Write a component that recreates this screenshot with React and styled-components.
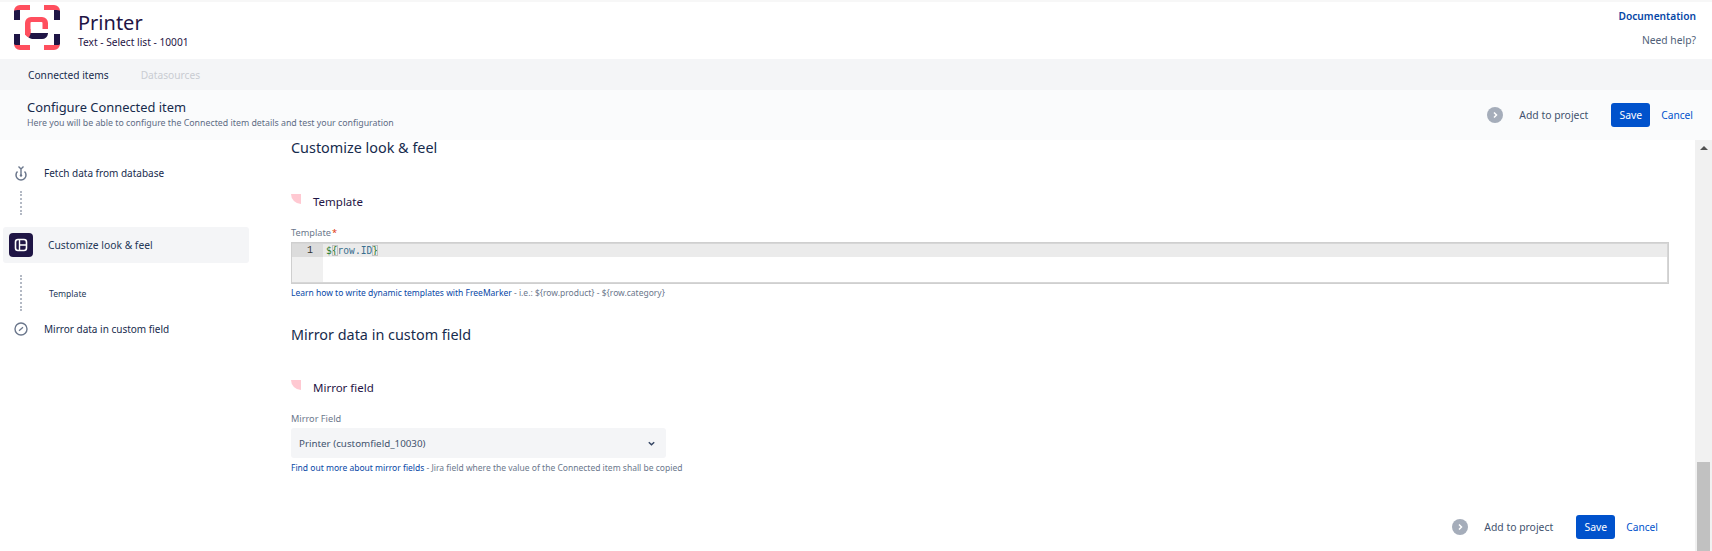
import React from "react";
import styled, { createGlobalStyle } from "styled-components";

const Global = createGlobalStyle`
  html, body { margin: 0; padding: 0; background: #fff; }
  body { font-family: "Noto Sans", "Open Sans", sans-serif; color: #172b4d; overflow: hidden; }
  * { box-sizing: border-box; }
`;

const Page = styled.div`
  width: 1712px; height: 551px; display: flex; flex-direction: column; overflow: hidden;
  border-top: 2px solid #f7f7f7;
`;
const Header = styled.header`
  height: 57px; display: flex; align-items: flex-start; padding: 3px 16px 0 14px; background: #fff;
`;
const Logo = styled.svg`width: 46px; height: 46px; flex: none;`;
const TitleBlock = styled.div`margin-left: 18px; display: flex; flex-direction: column; padding-top: 6px;`;
const Title = styled.div`font-size: 20px; line-height: 24px; color: #1f1545;`;
const Subtitle = styled.div`font-size: 10.2px; line-height: 14px; color: #1f1545;`;
const Help = styled.div`
  margin-left: auto; display: flex; flex-direction: column; align-items: flex-end; padding-top: 3px;
`;
const DocLink = styled.a`font-size: 10.2px; line-height: 16px; font-weight: 600; color: #0747a6;`;
const NeedHelp = styled.span`font-size: 10.3px; line-height: 16px; margin-top: 8px; color: #505f79;`;
const Tabs = styled.nav`
  height: 31px; background: #f4f5f7; display: flex; align-items: center; padding-left: 28px; gap: 32px;
`;
const Tab = styled.span`font-size: 10.2px; color: ${p => (p.$off ? "#c9ccd2" : "#172b4d")};`;
const ConfigBar = styled.div`
  height: 50px; background: #fafbfc; display: flex; align-items: center; padding: 0 19px 0 27px;
`;
const ConfigText = styled.div`display: flex; flex-direction: column;`;
const ConfigTitle = styled.div`font-size: 12.9px; line-height: 18px; color: #172b4d; margin-top: -2px;`;
const ConfigSub = styled.div`font-size: 8.8px; line-height: 13px; color: #5e6c84; margin-top: 1px;`;
const Actions = styled.div`display: flex; align-items: center; margin-left: auto;`;
const Circle = styled.span`
  width: 16px; height: 16px; border-radius: 50%; background: #a5adba; display: flex; align-items: center; justify-content: center;
`;
const AddLink = styled.span`font-size: 10.4px; color: #42526e; margin-left: 16px; width: 92px;`;
const SaveButton = styled.button`
  width: 39px; height: 24px; border: 0; border-radius: 3px; background: #0052cc; color: #fff;
  font: 10.4px "Noto Sans", sans-serif; padding: 0;
`;
const CancelLink = styled.span`font-size: 10.2px; color: #0052cc; margin-left: 11px;`;
const Body = styled.div`flex: 1; display: flex; min-height: 0;`;
const Sidebar = styled.aside`width: 291px; flex: none; padding: 24px 0 0 3px; display: flex; flex-direction: column;`;
const StepRow = styled.div`
  display: flex; align-items: center; height: 18px; font-size: 10px; color: #172b4d; padding-left: 9px;
`;
const StepIcon = styled.svg`width: 18px; height: 18px; flex: none; margin-right: 14px;`;
const Dots = styled.div`
  width: 0; height: ${p => p.$h}px; margin: ${p => p.$top}px 0 ${p => p.$bottom}px 17px;
  border-left: 2px dotted #b3b9c4;
`;
const ActiveRow = styled.div`
  width: 246px; height: 36px; border-radius: 3px; background: #f4f5f7; display: flex; align-items: center;
  padding-left: 6px; font-size: 10.3px; color: #253858;
`;
const ActiveIcon = styled.span`
  width: 24px; height: 24px; border-radius: 4px; background: #1f1545; display: flex; align-items: center;
  justify-content: center; margin-right: 15px;
`;
const SubStep = styled.div`font-size: 8.6px; height: 0; line-height: 0; color: #253858; margin: -26px 0 26px 46px;`;
const Content = styled.main`flex: 1; padding: 0 26px 0 0; display: flex; flex-direction: column; min-width: 0;`;
const SectionTitle = styled.h2`
  font-size: 14.4px; font-weight: 400; line-height: 20px; margin: ${p => p.$top}px 0 0; color: #172b4d;
`;
const FieldHead = styled.div`display: flex; align-items: center; margin-top: ${p => p.$top}px; height: 18px;`;
const Petal = styled.span`
  width: 10px; height: 10px; background: #ffc9d2; border-bottom-left-radius: 10px; margin-right: 12px; margin-top: -4px;
`;
const FieldTitle = styled.span`font-size: 11.5px; color: #1f1545;`;
const Label = styled.label`font-size: 9.2px; line-height: 12px; color: #6b778c; margin-top: ${p => p.$top}px; display: block;`;
const Req = styled.span`color: #de350b; margin-left: 1px;`;
const Editor = styled.div`
  height: 42px; margin-top: 3px; border: 1px solid #cfcfcf; display: flex; background: #fff;
  box-shadow: inset 0 0 0 1px #d6d6d6;
`;
const Gutter = styled.div`width: 31px; background: #f0f0f0; flex: none; margin: 1px 0;`;
const GutterNum = styled.div`
  height: 13px; background: #dcdcdc; font: 10px/13px "Liberation Mono", monospace; text-align: right; padding-right: 10px; color: #333;
`;
const CodeArea = styled.div`flex: 1; margin: 1px 1px 1px 0;`;
const CodeLine = styled.div`
  height: 13px; background: #ebebeb; font: 9.6px/13px "DejaVu Sans Mono", "Liberation Mono", monospace; padding-left: 3px; color: #333;
`;
const Dollar = styled.span`color: #2e7d32;`;
const Brace = styled.span`color: #2e7d32; outline: 1px solid #c2c2c2; outline-offset: -1px;`;
const Ident = styled.span`color: #3a6f8f;`;
const HelpText = styled.div`font-size: 8.5px; line-height: 12px; margin-top: ${p => p.$top}px; color: #6b778c;`;
const HelpLink = styled.a`color: #0747a6;`;
const Select = styled.div`
  width: 375px; height: 30px; margin-top: 3px; background: #f4f5f7; border-radius: 3px; display: flex; align-items: center;
  justify-content: space-between; padding: 0 10px 0 8px; font-size: 9.8px; color: #42526e;
`;
const FooterActions = styled.div`display: flex; justify-content: flex-end; margin-top: 41px; padding-right: 11px;`;
const Scrollbar = styled.div`
  width: 17px; flex: none; background: #f1f1f1; display: flex; flex-direction: column; justify-content: space-between; align-items: center; padding-top: 6px;
`;
const ArrowUp = styled.span`
  width: 0; height: 0; border-left: 4px solid transparent; border-right: 4px solid transparent; border-bottom: 4px solid #505050;
`;
const Thumb = styled.div`width: 13px; height: 89px; background: #c1c1c1;`;

const Chevron = () => (
  <svg width="8" height="8" viewBox="0 0 8 8"><path d="M3 1.5 5.5 4 3 6.5" fill="none" stroke="#fff" strokeWidth="1.5" /></svg>
);

const Actionset = () => (
  <Actions>
    <Circle><Chevron /></Circle>
    <AddLink>Add to project</AddLink>
    <SaveButton>Save</SaveButton>
    <CancelLink>Cancel</CancelLink>
  </Actions>
);

export default function App() {
  return (
    <Page>
      <Global />
      <Header>
        <Logo viewBox="0 0 46 46">
          <path d="M0 6a6 6 0 0 1 6-6h10v5H6L0 6Z" fill="#ff4f5e" />
          <path d="M0 6c0-1 2-1 6-1v10H0Z" fill="#1f1545" />
          <path d="M46 6a6 6 0 0 0-6-6H30v5h10l6 1Z" fill="#ff4f5e" />
          <path d="M46 6c0-1-2-1-6-1v10h6Z" fill="#1f1545" />
          <path d="M0 39a6 6 0 0 0 6 6h10v-5H6L0 39Z" fill="#ff4f5e" />
          <path d="M0 39c0 1 2 1 6 1V29H0Z" fill="#1f1545" />
          <path d="M46 39a6 6 0 0 1-6 6H30v-5h10l6-1Z" fill="#ff4f5e" />
          <path d="M46 39c0 1-2 1-6 1V29h6Z" fill="#1f1545" />
          <path d="M11 30V18a6 6 0 0 1 6-6h11a6 6 0 0 1 6 6v6h-5.500v-6a1 1 0 0 0-1-1H17.500a1 1 0 0 0-1 1v10l-5 2Z" fill="#ff4f5e" />
          <path d="M13 28h21v.5a6 6 0 0 1-6 5.500H18a6 6 0 0 1-5-5.500Z" fill="#1f1545" />
          <path d="M11 24h5.500v5l-1.500 3.500c-2.500-.5-4-2.500-4-4.500Z" fill="#ff4f5e" />
        </Logo>
        <TitleBlock>
          <Title>Printer</Title>
          <Subtitle>Text - Select list - 10001</Subtitle>
        </TitleBlock>
        <Help>
          <DocLink>Documentation</DocLink>
          <NeedHelp>Need help?</NeedHelp>
        </Help>
      </Header>
      <Tabs>
        <Tab>Connected items</Tab>
        <Tab $off>Datasources</Tab>
      </Tabs>
      <ConfigBar>
        <ConfigText>
          <ConfigTitle>Configure Connected item</ConfigTitle>
          <ConfigSub>Here you will be able to configure the Connected item details and test your configuration</ConfigSub>
        </ConfigText>
        <Actionset />
      </ConfigBar>
      <Body>
        <Sidebar>
          <StepRow>
            <StepIcon viewBox="0 0 18 18">
              <path d="M5.500 7.500a5 5 0 1 0 7 0" fill="none" stroke="#6b778c" strokeWidth="1.5" />
              <path d="M6.500 2.500 9 5l2.500-2.500M9 5v6" fill="none" stroke="#6b778c" strokeWidth="1.4" />
              <circle cx="9" cy="11.500" r="1.200" fill="#6b778c" />
            </StepIcon>
            Fetch data from database
          </StepRow>
          <Dots $h={24} $top={9} $bottom={12} />
          <ActiveRow>
            <ActiveIcon>
              <svg width="14" height="14" viewBox="0 0 14 14">
                <rect x="1.500" y="1.500" width="11" height="11" rx="2.500" fill="none" stroke="#fff" strokeWidth="1.600" />
                <path d="M5.500 2v10M5.500 7h7" stroke="#fff" strokeWidth="1.400" />
              </svg>
            </ActiveIcon>
            Customize look &amp; feel
          </ActiveRow>
          <Dots $h={36} $top={12} $bottom={9} />
          <SubStep>Template</SubStep>
          <StepRow>
            <StepIcon viewBox="0 0 18 18">
              <circle cx="9" cy="9" r="6" fill="none" stroke="#6b778c" strokeWidth="1.400" />
              <path d="m7 10.800 4-3.600" stroke="#6b778c" strokeWidth="1.200" />
            </StepIcon>
            Mirror data in custom field
          </StepRow>
        </Sidebar>
        <Content>
          <SectionTitle $top={-2}>Customize look &amp; feel</SectionTitle>
          <FieldHead $top={34}><Petal /><FieldTitle>Template</FieldTitle></FieldHead>
          <Label $top={17}>Template<Req>*</Req></Label>
          <Editor>
            <Gutter><GutterNum>1</GutterNum></Gutter>
            <CodeArea>
              <CodeLine><Dollar>$</Dollar><Brace>{"{"}</Brace><Ident>row.ID</Ident><Brace>{"}"}</Brace></CodeLine>
            </CodeArea>
          </Editor>
          <HelpText $top={3}>
            <HelpLink>Learn how to write dynamic templates with FreeMarker</HelpLink> - i.e.: ${"{row.product}"} - ${"{row.category}"}
          </HelpText>
          <SectionTitle $top={26}>Mirror data in custom field</SectionTitle>
          <FieldHead $top={33}><Petal /><FieldTitle>Mirror field</FieldTitle></FieldHead>
          <Label $top={17}>Mirror Field</Label>
          <Select>
            Printer (customfield_10030)
            <svg width="9" height="9" viewBox="0 0 10 10"><path d="M2 3.500 5 6.500 8 3.500" fill="none" stroke="#344563" strokeWidth="1.600" /></svg>
          </Select>
          <HelpText $top={4}>
            <HelpLink>Find out more about mirror fields</HelpLink> - Jira field where the value of the Connected item shall be copied
          </HelpText>
          <FooterActions><Actionset /></FooterActions>
        </Content>
        <Scrollbar><ArrowUp /><Thumb /></Scrollbar>
      </Body>
    </Page>
  );
}
